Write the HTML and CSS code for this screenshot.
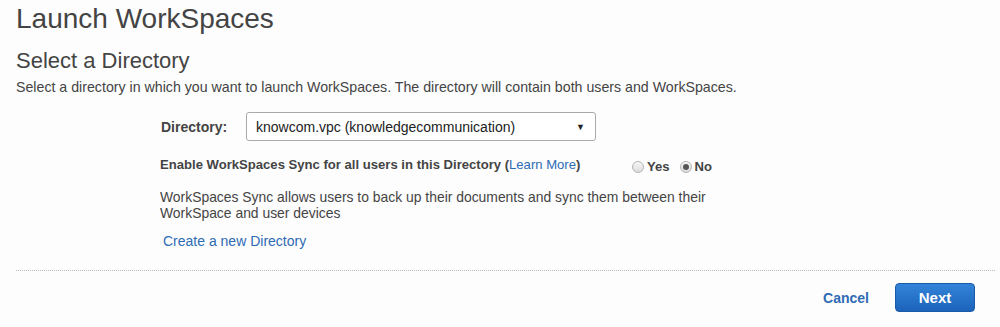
FILE: index.html
```html
<!DOCTYPE html>
<html lang="en">
<head>
    <meta charset="UTF-8">
    <title>Launch WorkSpaces</title>
    <link rel="stylesheet" href="styles.css">
</head>
<body>
    <main class="page">
        <h1 class="page-title">Launch WorkSpaces</h1>
        <h2 class="section-title">Select a Directory</h2>
        <p class="section-desc">Select a directory in which you want to launch WorkSpaces. The directory will contain both users and WorkSpaces.</p>

        <form class="dir-form">
            <div class="form-row">
                <label class="form-label" for="directory">Directory:</label>
                <div class="select-box">
                    <span class="select-value">knowcom.vpc (knowledgecommunication)</span>
                    <span class="select-arrow">&#9660;</span>
                </div>
            </div>

            <div class="sync-row">
                <span class="sync-label">Enable WorkSpaces Sync for all users in this Directory (<a href="#" class="link">Learn More</a>)</span>
                <div class="radios">
                    <label class="radio"><span class="radio-dot"></span>Yes</label>
                    <label class="radio"><span class="radio-dot checked"></span>No</label>
                </div>
            </div>

            <p class="sync-help">WorkSpaces Sync allows users to back up their documents and sync them between their WorkSpace and user devices</p>

            <a href="#" class="link create-link">Create a new Directory</a>
        </form>

        <div class="actions">
            <a href="#" class="btn-cancel">Cancel</a>
            <button type="button" class="btn-next">Next</button>
        </div>
    </main>
</body>
</html>
```

FILE: styles.css
```css
/* Base */
* {
    margin: 0;
    padding: 0;
    box-sizing: border-box;
}

body {
    font-family: 'Liberation Sans', Arial, sans-serif;
    color: #444;
    background: #fdfdfd;
}

.page {
    padding: 3px 5px 0 16px;
}

/* Headings */
.page-title {
    font-size: 28px;
    font-weight: normal;
    line-height: 32px;
    color: #444;
}

.section-title {
    font-size: 22px;
    font-weight: normal;
    line-height: 26px;
    margin-top: 13px;
}

.section-desc {
    font-size: 14.2px;
    line-height: 16px;
    margin-top: 5px;
}

/* Form */
.dir-form {
    padding-left: 144px;
    margin-top: 17px;
}

.form-row {
    display: flex;
    align-items: center;
    padding-left: 1px;
}

.form-label {
    font-size: 14px;
    font-weight: bold;
    width: 85px;
}

.select-box {
    width: 350px;
    height: 29px;
    border: 1px solid #aaa;
    border-radius: 3px;
    background: #fff;
    display: flex;
    align-items: center;
    justify-content: space-between;
    padding: 0 10px 0 9px;
    font-size: 14px;
    color: #222;
}

.select-arrow {
    font-size: 9px;
    color: #222;
}

.sync-row {
    display: flex;
    align-items: center;
    margin-top: 14px;
    font-size: 13.1px;
}

.sync-label {
    font-weight: bold;
    width: 472px;
}

.sync-label .link {
    font-weight: normal;
}

.radios {
    display: flex;
    gap: 10px;
    font-weight: bold;
    padding-top: 4px;
}

.radio {
    display: flex;
    align-items: center;
    gap: 3px;
}

.radio-dot {
    width: 12px;
    height: 12px;
    border-radius: 50%;
    border: 1px solid #b5b5b5;
    background: linear-gradient(#f6f6f6, #dcdcdc);
    display: inline-flex;
    align-items: center;
    justify-content: center;
}

.radio-dot.checked::after {
    content: "";
    width: 6px;
    height: 6px;
    border-radius: 50%;
    background: #555;
}

.sync-help {
    font-size: 13.9px;
    line-height: 16px;
    width: 560px;
    margin-top: 15px;
}

.link {
    color: #2e6bb5;
    text-decoration: none;
}

.create-link {
    display: inline-block;
    font-size: 14px;
    margin-top: 12px;
    margin-left: 3px;
}

/* Actions */
.actions {
    border-top: 1px dotted #bbb;
    margin-top: 20px;
    padding: 12px 20px 0 0;
    display: flex;
    justify-content: flex-end;
    align-items: center;
    gap: 26px;
}

.btn-cancel {
    font-size: 14px;
    font-weight: bold;
    color: #2e6bb5;
    text-decoration: none;
}

.btn-next {
    width: 80px;
    height: 29px;
    border: 1px solid #1b5aa8;
    border-radius: 4px;
    background: linear-gradient(#3284d8, #1c63ba);
    color: #fff;
    font-family: inherit;
    font-size: 15px;
    font-weight: bold;
}
```
